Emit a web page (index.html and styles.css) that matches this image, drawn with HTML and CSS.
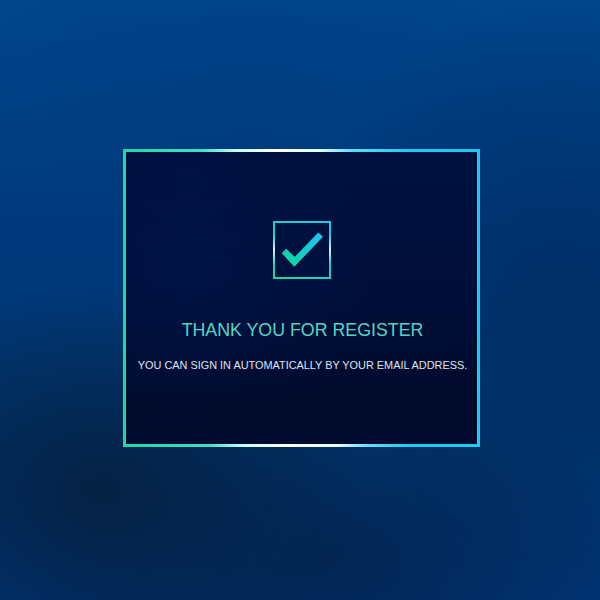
FILE: index.html
```html
<!DOCTYPE html>
<html>
<head>
<meta charset="utf-8">
<link rel="stylesheet" href="styles.css">
</head>
<body>
<div class="page">
  <div class="frame">
    <div class="panel">
      <svg class="check" width="58" height="58" viewBox="0 0 58 58">
        <defs>
          <linearGradient id="bx" x1="0" y1="1" x2="1" y2="0">
            <stop offset="0" stop-color="#1bd7a2"/>
            <stop offset="1" stop-color="#1cc9f2"/>
          </linearGradient>
          <linearGradient id="ck" x1="0" y1="1" x2="1" y2="0">
            <stop offset="0.2" stop-color="#0fd4a8"/>
            <stop offset="0.8" stop-color="#19c6ec"/>
          </linearGradient>
          <linearGradient id="gl" x1="0" y1="0" x2="0" y2="1">
            <stop offset="0" stop-color="#fff" stop-opacity="0"/>
            <stop offset="0.5" stop-color="#fff" stop-opacity="0.8"/>
            <stop offset="1" stop-color="#fff" stop-opacity="0"/>
          </linearGradient>
        </defs>
        <rect x="1" y="1" width="56" height="56" fill="none" stroke="url(#bx)" stroke-width="2"/>
        <rect x="0" y="14" width="2" height="30" fill="url(#gl)"/>
        <rect x="56" y="14" width="2" height="30" fill="url(#gl)"/>
        <path d="M8.7 32.2 L21.3 45.8 L50 15.8 L45.3 11.5 L21.8 35.8 L13.2 27.8 Z" fill="url(#ck)"/>
      </svg>
      <h1 class="title">THANK YOU FOR REGISTER</h1>
      <p class="sub">YOU CAN SIGN IN AUTOMATICALLY BY YOUR EMAIL ADDRESS.</p>
    </div>
  </div>
</div>
</body>
</html>
```
FILE: styles.css
```css
html, body {
  margin: 0;
  padding: 0;
  width: 600px;
  height: 600px;
  overflow: hidden;
}
body {
  font-family: "Liberation Sans", Arial, sans-serif;
  background:
    radial-gradient(ellipse 260px 200px at 100px 490px, rgba(6, 30, 60, 0.85), rgba(6, 30, 60, 0) 100%),
    radial-gradient(ellipse 300px 180px at 330px 560px, rgba(5, 32, 70, 0.7), rgba(5, 32, 70, 0) 100%),
    radial-gradient(ellipse 260px 300px at 560px 300px, rgba(0, 40, 90, 0.6), rgba(0, 40, 90, 0) 100%),
    radial-gradient(ellipse 300px 200px at 250px 130px, rgba(0, 58, 125, 0.5), rgba(0, 58, 125, 0) 100%),
    linear-gradient(180deg, #00458b 0%, #00397c 40%, #00356f 70%, #003374 100%);
}
.page {
  padding: 149px 0 0 123px;
}
.frame {
  width: 351px;
  height: 292px;
  padding: 3px;
  background:
    linear-gradient(90deg, #1fd8a0 0%, #3ee0c4 22%, #c8fff4 32%, #ffffff 42%, #e8fbff 55%, #5ddcf4 64%, #1ecbf0 80%, #1ecbf0 100%) top / 100% 3px no-repeat,
    linear-gradient(90deg, #1fd8a0 0%, #3ee0c4 24%, #d0fff6 34%, #ffffff 46%, #f0fdff 60%, #6adff5 68%, #1ecbf0 80%, #1ecbf0 100%) bottom / 100% 3px no-repeat,
    linear-gradient(90deg, #1fd8a0 0%, #1ecbf0 100%);
}
.panel {
  height: 100%;
  box-sizing: border-box;
  padding-top: 69px;
  display: flex;
  flex-direction: column;
  align-items: center;
  background:
    radial-gradient(ellipse 200px 160px at 60px 120px, rgba(0, 25, 80, 0.5), rgba(0, 25, 80, 0) 100%),
    linear-gradient(180deg, #001140 0%, #000d38 50%, #000a2a 88%, #000c30 100%);
}
.check {
  display: block;
  width: 58px;
  height: 58px;
  margin-left: 1px;
}
.title {
  margin: 41px 0 0 2px;
  font-size: 17.8px;
  font-weight: normal;
  color: #52d6c4;
  line-height: 20px;
  white-space: nowrap;
}
.sub {
  margin: 18px 0 0 2px;
  font-size: 10.9px;
  line-height: 14px;
  color: #dfe4ee;
  white-space: nowrap;
  text-align: center;
}
```
